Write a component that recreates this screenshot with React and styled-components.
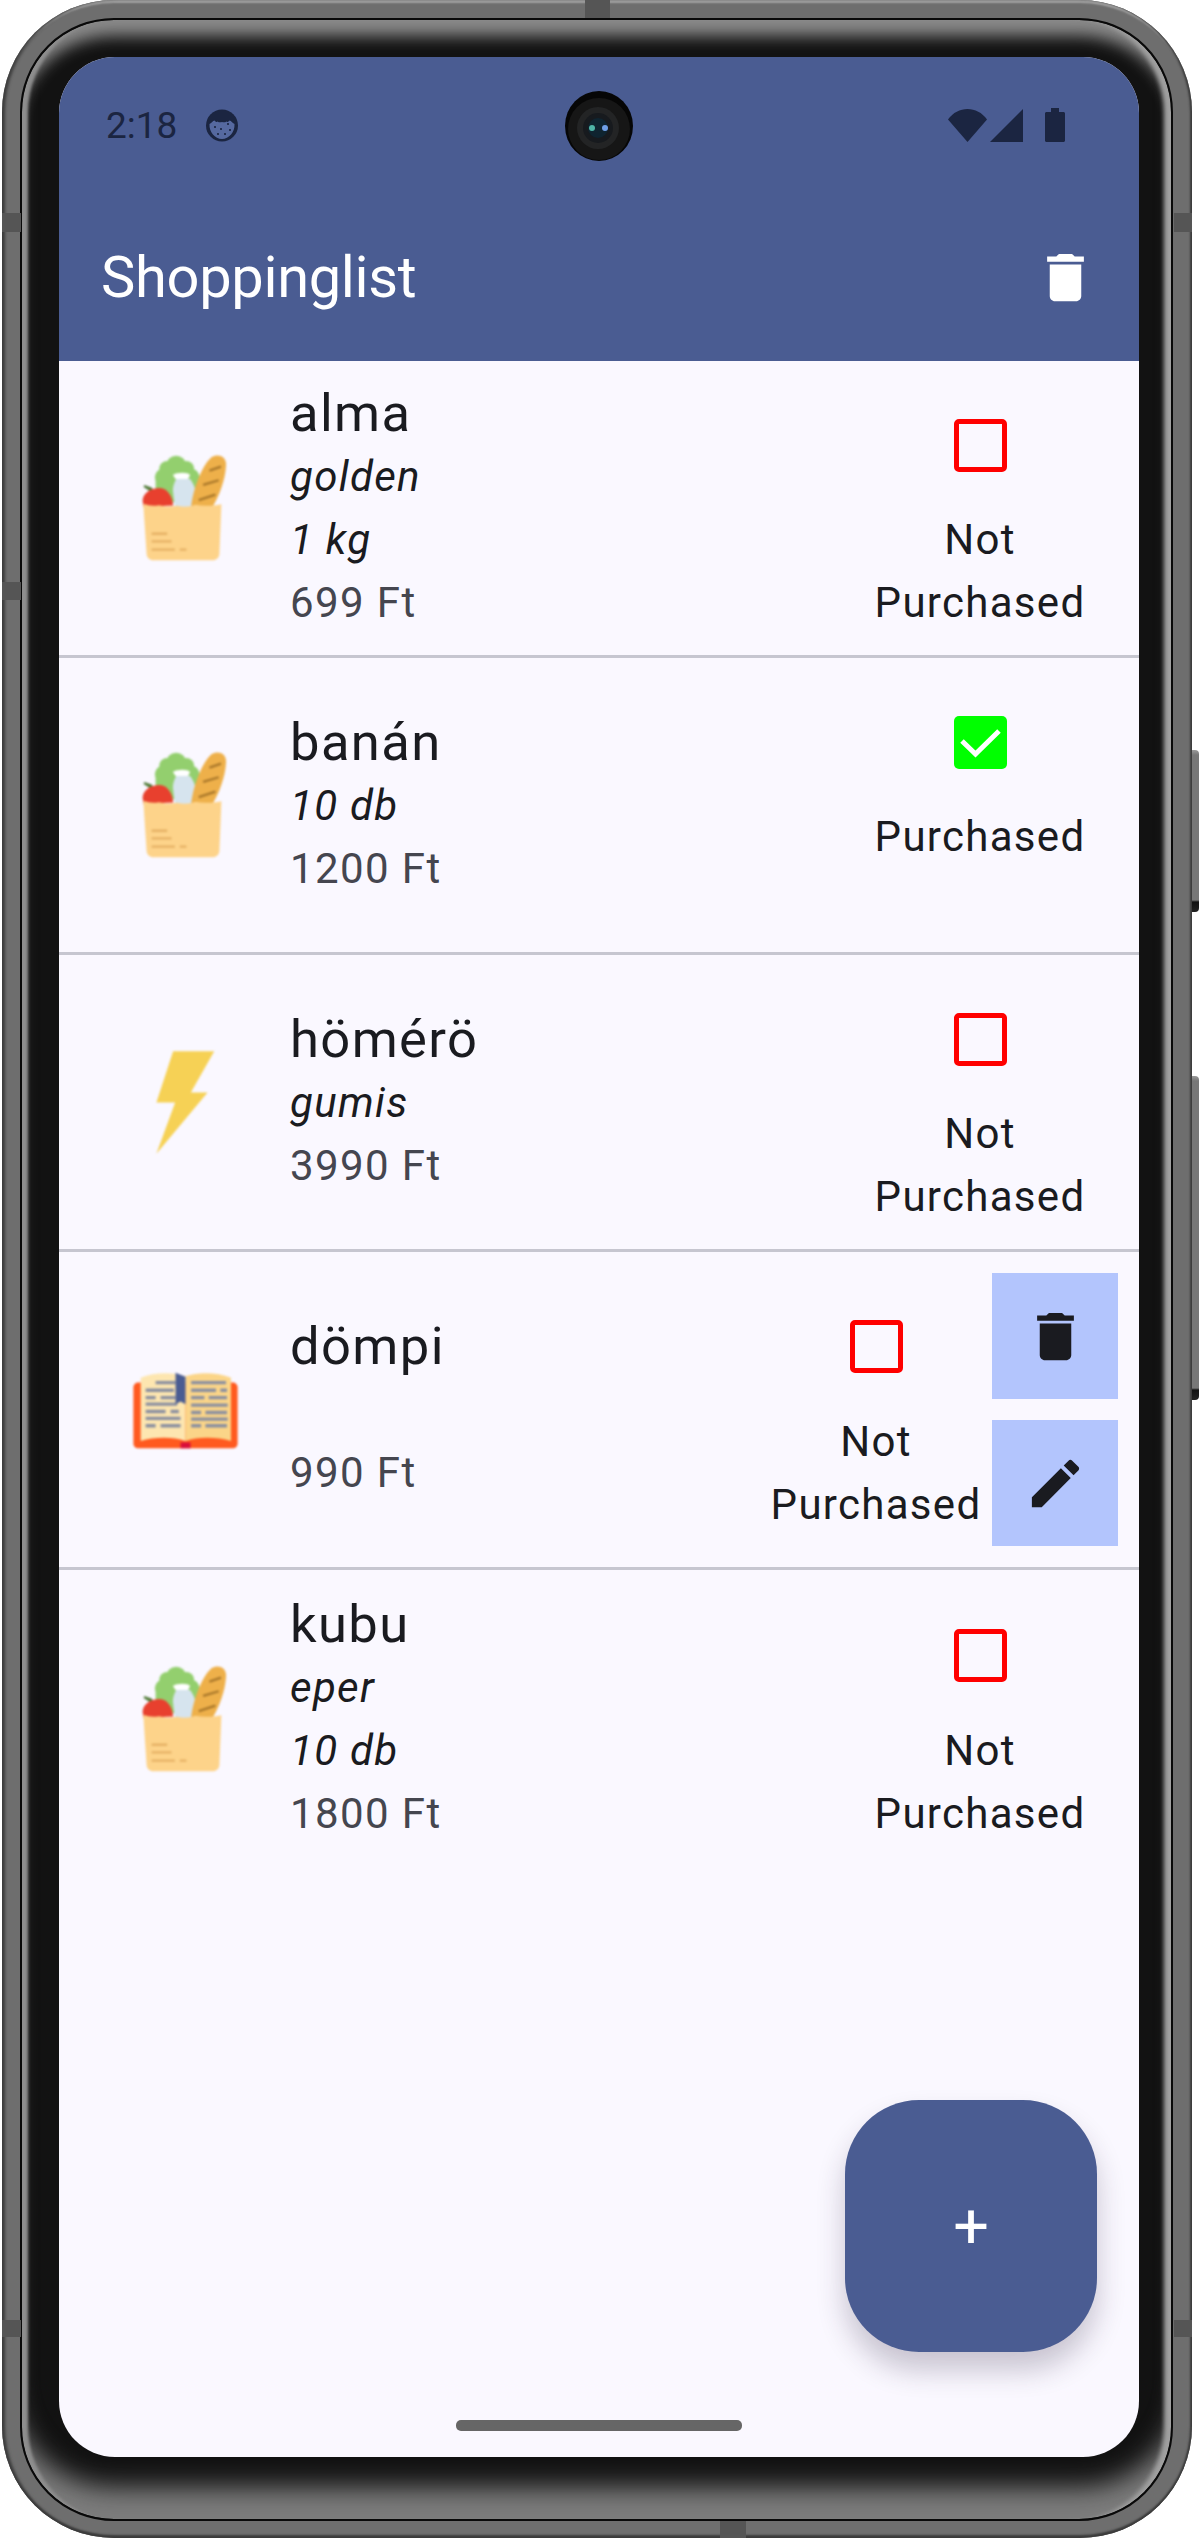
import React from "react";
import styled, { createGlobalStyle } from "styled-components";

const GlobalStyle = createGlobalStyle`
  html, body {
    margin: 0;
    padding: 0;
    background: #fff;
  }
  * {
    box-sizing: border-box;
  }
`;

// Device frame
const Device = styled.div`
  position: relative;
  width: 1200px;
  height: 2541px;
  overflow: hidden;
  font-family: Roboto, "Liberation Sans", sans-serif;
`;

const Shell = styled.div`
  margin-left: 2px;
  width: 1190px;
  height: 2538px;
  padding: 18px 19px 17px 18px;
  border-radius: 112px;
  background: #6e6e6e;
  box-shadow: inset 4px 0 3px -1px #3c3c3c, inset -3px 0 2px -1px #3c3c3c, inset 0 4px 2px -1px #a0a0a0,
    inset 0 -4px 2px -1px #3c3c3c;
`;

const Bezel = styled.div`
  width: 100%;
  height: 100%;
  padding: 37px 33px 63px 37px;
  border: 2px solid #090909;
  border-radius: 94px;
  background: #121212;
  box-shadow: inset 9px 0 3px -3px #8e8e8e, inset -10px 0 4px -3px #a0a0a0, inset 0 24px 16px -8px #8a8a8a,
    inset 0 -44px 26px -12px #7c7c7c;
`;

const SideKey = styled.div`
  position: absolute;
  left: 1192px;
  top: ${(p) => p.$top}px;
  width: 7px;
  height: ${(p) => p.$height}px;
  border-radius: 0 4px 4px 0;
  background: linear-gradient(#999 0, #777 5px, #777 calc(100% - 12px), #111 calc(100% - 10px), #222 100%);
`;

const Band = styled.div`
  position: absolute;
  top: ${(p) => p.$top}px;
  left: ${(p) => p.$left}px;
  width: ${(p) => p.$width}px;
  height: ${(p) => p.$height}px;
  background: #555;
`;

// Screen
const Screen = styled.div`
  position: relative;
  display: flex;
  flex-direction: column;
  width: 1080px;
  height: 2400px;
  border-radius: 56px;
  overflow: hidden;
  background: #faf8ff;
`;

const Header = styled.header`
  flex: none;
  background: #4a5c92;
`;

const StatusBar = styled.div`
  display: flex;
  align-items: center;
  height: 136px;
  padding: 0 74px 0 47px;
  color: #1b2541;
`;

const Time = styled.span`
  font-size: 37px;
  margin-right: 29px;
`;

const StatusRight = styled.div`
  display: flex;
  align-items: center;
  gap: 3px;
  margin-left: auto;
`;

const BatteryGap = styled.span`
  width: 16px;
`;

const CameraHole = styled.div`
  position: absolute;
  top: 34px;
  left: 506px;
  width: 68px;
  height: 70px;
`;

const TopBar = styled.div`
  display: flex;
  align-items: center;
  justify-content: space-between;
  height: 168px;
  padding: 0 42px;
`;

const Title = styled.h1`
  margin: 0;
  font-size: 57.75px;
  font-weight: 400;
  line-height: 73px;
  letter-spacing: -0.3px;
  color: #fff;
`;

const List = styled.div`
  flex: 1;
`;

const Row = styled.div`
  display: flex;
  align-items: center;
  min-height: 297px;
  padding: 21px ${(p) => (p.$expanded ? 21 : 53)}px 21px 21px;
  border-bottom: ${(p) => (p.$last ? "none" : "3px solid #c6c6d0")};
`;

const IconSlot = styled.div`
  flex: none;
  display: flex;
  align-items: center;
  justify-content: center;
  width: 210px;
  filter: blur(0.8px);
`;

const Info = styled.div`
  flex: 1;
  min-width: 0;
`;

const Name = styled.div`
  font-size: 52.5px;
  line-height: 63px;
  letter-spacing: 1.4px;
  color: #1a1b20;
`;

const Detail = styled.div`
  min-height: 63px;
  font-size: 42px;
  font-style: italic;
  line-height: 63px;
  letter-spacing: 1.3px;
  color: #1a1b20;
`;

const Price = styled.div`
  font-size: 42px;
  line-height: 63px;
  letter-spacing: 1.4px;
  color: #45464f;
`;

const Status = styled.div`
  flex: none;
  display: flex;
  flex-direction: column;
  align-items: center;
  width: 212px;
  text-align: center;
`;

const CheckSlot = styled.div`
  display: flex;
  align-items: center;
  justify-content: center;
  width: 126px;
  height: 126px;
`;

const CheckBox = styled.div`
  display: flex;
  align-items: center;
  justify-content: center;
  width: 53px;
  height: 53px;
  border: ${(p) => (p.$checked ? "none" : "5px solid #ff0000")};
  border-radius: 5px;
  background: ${(p) => (p.$checked ? "#00ff00" : "transparent")};
`;

const StatusText = styled.div`
  min-height: 126px;
  font-size: 42px;
  line-height: 63px;
  letter-spacing: 1.3px;
  color: #1a1b20;
`;

const Actions = styled.div`
  flex: none;
  display: flex;
  flex-direction: column;
  gap: 21px;
  margin-left: 10px;
`;

const ActionButton = styled.button`
  display: flex;
  align-items: center;
  justify-content: center;
  width: 126px;
  height: 126px;
  padding: 0;
  border: none;
  background: #b3c5fd;
  color: #1a1b20;
`;

const Fab = styled.button`
  position: absolute;
  right: 42px;
  bottom: 105px;
  display: flex;
  align-items: center;
  justify-content: center;
  width: 252px;
  height: 252px;
  padding: 0;
  border: none;
  border-radius: 74px;
  background: #4a5c92;
  color: #fff;
  font-family: inherit;
  font-size: 63px;
  box-shadow: 0 18px 28px rgba(40, 30, 60, 0.24);
`;

const NavArea = styled.div`
  flex: none;
  display: flex;
  justify-content: center;
  padding: 0 0 26px;
`;

const HomePill = styled.div`
  width: 286px;
  height: 11px;
  border-radius: 5px;
  background: #666;
`;

// Icons
const TrashIcon = ({ color = "currentColor" }) => (
  <svg width="63" height="63" viewBox="0 0 24 24" fill={color}>
    <path d="M6 19c0 1.1.9 2 2 2h8c1.1 0 2-.9 2-2V7H6v12zM19 4h-3.5l-1-1h-5l-1 1H5v2h14V4z" />
  </svg>
);

const PencilIcon = () => (
  <svg width="63" height="63" viewBox="0 0 24 24" fill="currentColor">
    <path d="M3 17.25V21h3.75L17.81 9.94l-3.75-3.75L3 17.25zM20.71 7.04c.39-.39.39-1.02 0-1.41l-2.34-2.34c-.39-.39-1.02-.39-1.41 0l-1.83 1.83 3.75 3.75 1.83-1.83z" />
  </svg>
);

const CheckMark = () => (
  <svg width="53" height="53" viewBox="0 0 53 53" fill="none">
    <path d="M8 25 L21.5 38 L45 15" stroke="#fff" strokeWidth="5" />
  </svg>
);

const AppNotifIcon = () => (
  <svg width="32" height="33" viewBox="0 0 32 33">
    <circle cx="16" cy="16.5" r="16" fill="#1b2541" />
    <path d="M3.500 15c2.500-1 3-3 5-3.500 1 1.500 2 2 3 1 1.500 1 3 1 4.500 .5 1.500 .5 3 .5 4.500-.5 1 1 2 .5 3-1 2 .5 2.500 2.500 5 3.500 .5 8-5.500 15-12.500 15S3 23 3.500 15z" fill="#5669a0" />
    <g fill="#1b2541">
      <circle cx="9" cy="18" r="1.100" />
      <circle cx="15" cy="20" r="1.100" />
      <circle cx="22" cy="15" r="1.100" />
      <circle cx="24" cy="21" r="1.100" />
      <circle cx="12" cy="25" r="1.100" />
      <circle cx="19" cy="25" r="1.100" />
    </g>
  </svg>
);

const CameraLens = () => (
  <svg width="68" height="70" viewBox="0 0 68 70">
    <ellipse cx="34" cy="35" rx="34" ry="35" fill="#060606" />
    <circle cx="34" cy="38" r="31" fill="#161616" />
    <circle cx="33" cy="37" r="21" fill="#232425" />
    <circle cx="33" cy="37" r="15" fill="#171a1e" />
    <circle cx="33" cy="37" r="10" fill="#0f2430" />
    <circle cx="27" cy="37" r="3" fill="#4fb5a8" />
    <circle cx="40" cy="37" r="3" fill="#6f9fe8" />
  </svg>
);

const WifiIcon = () => (
  <svg width="39" height="33" viewBox="0 0 39 33" fill="#1b2541">
    <path d="M0 10.500C5 3.500 12 0 19.500 0S34 3.500 39 10.500L19.500 33z" />
  </svg>
);

const SignalIcon = () => (
  <svg width="33" height="33" viewBox="0 0 33 33" fill="#1b2541">
    <path d="M33 0v33H0z" />
  </svg>
);

const BatteryIcon = () => (
  <svg width="20" height="34" viewBox="0 0 20 34" fill="#1b2541">
    <path d="M6 0h8v4h4.500c.8 0 1.500.7 1.500 1.500V32.500c0 .8-.7 1.500-1.500 1.500h-17C.7 34 0 33.300 0 32.500V5.500C0 4.700.7 4 1.500 4H6z" />
  </svg>
);

const GroceryIcon = () => (
  <svg width="87" height="108" viewBox="130 105 260 325">
    <g fill="#93cf6e">
      <circle cx="232" cy="140" r="30" />
      <circle cx="205" cy="150" r="24" />
      <circle cx="262" cy="150" r="24" />
      <circle cx="190" cy="175" r="22" />
      <circle cx="282" cy="175" r="20" />
      <rect x="170" y="150" width="130" height="100" rx="20" />
    </g>
    <path d="M136 198l22 8 8 10-8 4-24-16z" fill="#4f7a36" />
    <path d="M131 245c0-22 25-38 50-38 22 0 40 22 42 53l-90 4z" fill="#e8402e" />
    <path d="M222 168c10-8 45-10 52 0l-6 12h-38z" fill="#fff" />
    <path d="M232 180h42c8 12 18 28 16 48l-8 37h-54l-6-50c0-15 5-25 10-35z" fill="#d6e4ee" />
    <path d="M338 115c18-12 46-6 44 24-2 45-22 95-40 124h-65c6-50 30-120 61-148z" fill="#eeb04a" />
    <path d="M332 155l35-12M313 198l47-14M300 244l50-17" stroke="#a9772a" strokeWidth="7" fill="none" />
    <path d="M133 255c15 5 30 8 47 4 18 5 35 5 55 2 20 5 40 3 55-3 25 5 50 3 78-2l-6 150c-1 12-10 19-22 19H165c-12 0-21-7-22-19z" fill="#fdd38a" />
    <path d="M158 345h47M158 368h60M158 393h70M243 393h20" stroke="#e6b265" strokeWidth="7" fill="none" />
  </svg>
);

const BoltIcon = () => (
  <svg width="62" height="107" viewBox="165 85 185 320">
    <path d="M222 92H345L275 215H325L172 398L228 245H172z" fill="#f6d155" />
  </svg>
);

const BookIcon = () => (
  <svg width="107" height="78" viewBox="95 125 320 235">
    <rect x="98" y="160" width="314" height="198" rx="14" fill="#ff5a1f" />
    <rect x="240" y="340" width="30" height="18" fill="#d90f3a" />
    <path d="M120 145c40-16 95-18 135-4v195c-40-14-95-12-135 0z" fill="#fde6b0" />
    <path d="M255 141c40-14 95-12 137 4v191c-42-12-97-14-137 0z" fill="#fbd588" />
    <path
      d="M165 160h60M135 183h85M135 205h30M180 205h45M135 225h95M135 247h60M210 247h25M135 268h105M135 290h30M180 290h60M272 160h105M272 183h75M360 183h20M272 205h40M325 205h55M272 228h110M272 250h30M315 250h65M272 270h110M272 290h30M315 290h65"
      stroke="#8a8fa0"
      strokeWidth="10"
      fill="none"
    />
    <path d="M225 130l30 12v83l-15-8-15 8z" fill="#4a5c92" />
  </svg>
);

const items = [
  { name: "alma", details: ["golden", "1 kg"], price: "699 Ft", icon: <GroceryIcon />, purchased: false },
  { name: "banán", details: ["10 db"], price: "1200 Ft", icon: <GroceryIcon />, purchased: true },
  { name: "hömérö", details: ["gumis"], price: "3990 Ft", icon: <BoltIcon />, purchased: false },
  { name: "dömpi", details: [""], price: "990 Ft", icon: <BookIcon />, purchased: false, expanded: true },
  { name: "kubu", details: ["eper", "10 db"], price: "1800 Ft", icon: <GroceryIcon />, purchased: false, last: true },
];

function App() {
  return (
    <Device>
      <GlobalStyle />
      <SideKey $top={750} $height={162} />
      <SideKey $top={1076} $height={324} />
      <Shell>
        <Bezel>
          <Screen>
            <Header>
              <StatusBar>
                <Time>2:18</Time>
                <AppNotifIcon />
                <StatusRight>
                  <WifiIcon />
                  <SignalIcon />
                  <BatteryGap />
                  <BatteryIcon />
                </StatusRight>
              </StatusBar>
              <CameraHole>
                <CameraLens />
              </CameraHole>
              <TopBar>
                <Title>Shoppinglist</Title>
                <TrashIcon color="#fff" />
              </TopBar>
            </Header>
            <List>
              {items.map((item) => (
                <Row key={item.name} $expanded={item.expanded} $last={item.last}>
                  <IconSlot>{item.icon}</IconSlot>
                  <Info>
                    <Name>{item.name}</Name>
                    {item.details.map((d, i) => (
                      <Detail key={i}>{d}</Detail>
                    ))}
                    <Price>{item.price}</Price>
                  </Info>
                  <Status>
                    <CheckSlot>
                      <CheckBox $checked={item.purchased}>{item.purchased && <CheckMark />}</CheckBox>
                    </CheckSlot>
                    <StatusText>{item.purchased ? "Purchased" : "Not Purchased"}</StatusText>
                  </Status>
                  {item.expanded && (
                    <Actions>
                      <ActionButton>
                        <TrashIcon />
                      </ActionButton>
                      <ActionButton>
                        <PencilIcon />
                      </ActionButton>
                    </Actions>
                  )}
                </Row>
              ))}
            </List>
            <NavArea>
              <HomePill />
            </NavArea>
            <Fab>+</Fab>
          </Screen>
        </Bezel>
      </Shell>
      <Band $top={213} $left={2} $width={19} $height={19} />
      <Band $top={582} $left={2} $width={19} $height={18} />
      <Band $top={213} $left={1174} $width={18} $height={19} />
      <Band $top={0} $left={585} $width={25} $height={18} />
      <Band $top={2521} $left={720} $width={26} $height={17} />
      <Band $top={2320} $left={2} $width={19} $height={17} />
      <Band $top={2320} $left={1174} $width={18} $height={17} />
    </Device>
  );
}

export default App;
